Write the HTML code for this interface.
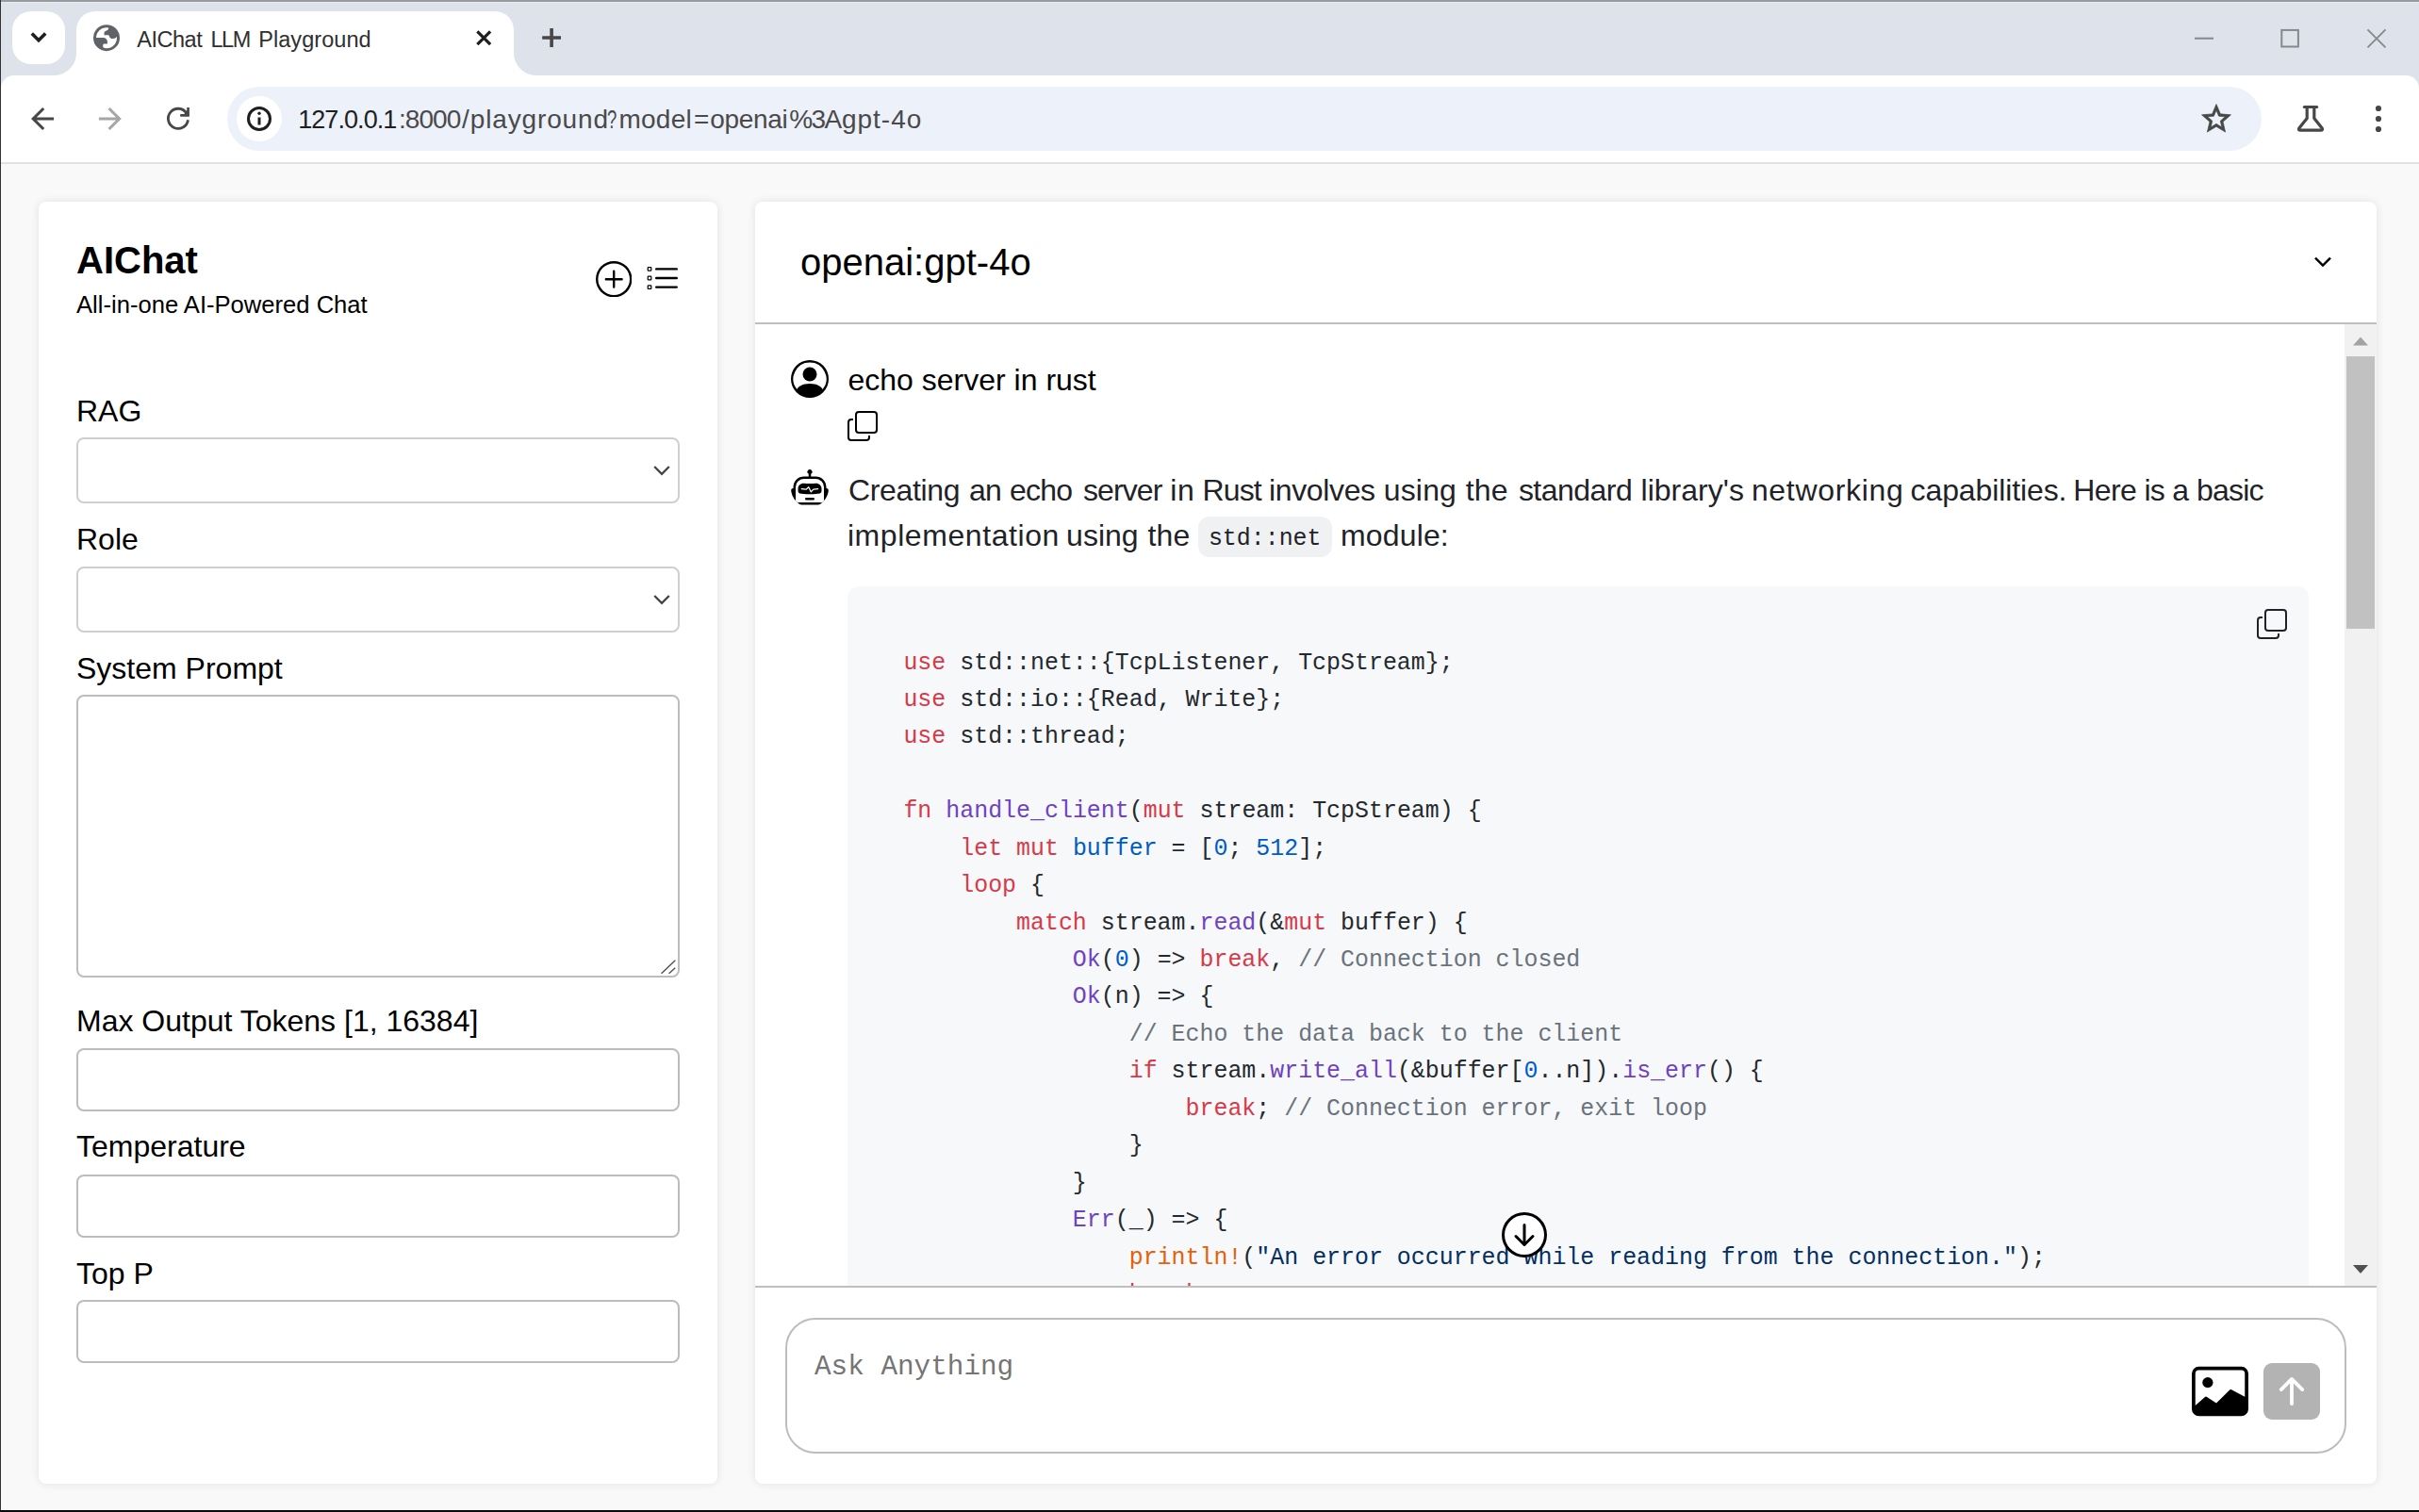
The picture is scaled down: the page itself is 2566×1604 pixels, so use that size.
<!DOCTYPE html>
<html lang="en">
<head>
<meta charset="utf-8">
<title>AIChat LLM Playground</title>
<style>
*{box-sizing:border-box;margin:0;padding:0}
html,body{width:2566px;height:1604px;overflow:hidden;background:#f9f9f9}
body{position:relative;font-family:"Liberation Sans",Arial,sans-serif;color:#000}
.abs{position:absolute}
svg{display:block;position:absolute}
/* ---------- browser chrome ---------- */
#frame{left:0;top:0;width:2566px;height:174px;background:#dee2ea}
#topb{left:0;top:0;width:2566px;height:2px;background:#989c9f}
#hl{left:1px;top:2px;width:2565px;height:1px;background:#e6eaf2}
#leftb{left:0;top:0;width:1px;height:1604px;background:#333;z-index:50}
#botb{left:0;top:1602px;width:2566px;height:2px;background:#0b0b0b;z-index:50}
#tabsearch{left:13px;top:12px;width:56px;height:56px;border-radius:20px;background:#fff}
#tab{left:81px;top:12px;width:464px;height:70px;border-radius:20px 20px 0 0;background:#fff}
#tab:before,#tab:after{content:"";position:absolute;bottom:2px;width:24px;height:24px;background:radial-gradient(circle at 0 0,rgba(255,255,255,0) 23.5px,#fff 24.5px)}
#tab:before{left:-24px}
#tab:after{right:-24px;background:radial-gradient(circle at 100% 0,rgba(255,255,255,0) 23.5px,#fff 24.5px)}
#toolbar{left:1px;top:80px;width:2565px;height:92px;background:#fff;border-radius:14px 14px 0 0}
#tbline{left:1px;top:172px;width:2565px;height:2px;background:#dfe1e3}
#omni{left:241px;top:92px;width:2158px;height:68px;border-radius:34px;background:#edf1fa}
#siteinfo{left:251px;top:102px;width:48px;height:48px;border-radius:24px;background:#fff}
.segoe{font-family:"Liberation Sans",Arial,sans-serif;white-space:nowrap}
#tabtitle{left:0;top:27px;width:540px;height:30px;font-size:23.5px;line-height:30px;color:#303030}
#tabtitle span{position:absolute;top:0}
#url{left:0;top:108.5px;width:1200px;height:36px;font-size:28px;line-height:36px;color:#4a4a4a}
#url span{position:absolute;top:0}
#url .h{color:#1f1f1f}
/* ---------- page ---------- */
.card{background:#fff;border-radius:8px;box-shadow:0 0 10px rgba(0,0,0,.1)}
#side{left:41px;top:214px;width:720px;height:1360px}
#main{left:801px;top:214px;width:1720px;height:1360px;overflow:hidden}
.lbl{left:81px;font-size:32px;line-height:40px;white-space:nowrap}
.inp{left:81px;width:640px;border:2px solid #c3c3c3;border-radius:8px;background:#fff}
</style>
</head>
<body>
<!-- browser frame -->
<div class="abs" id="frame"></div>
<div class="abs" id="hl"></div>
<div class="abs" id="topb"></div>
<div class="abs" id="tabsearch"></div>
<div class="abs" id="tab"></div>
<div class="abs" id="toolbar"></div>
<div class="abs" id="tbline"></div>
<div class="abs" id="omni"></div>
<div class="abs" id="siteinfo"></div>
<div class="abs segoe" id="tabtitle"><span style="left:145.2px;letter-spacing:-0.46px">AIChat</span> <span style="left:223.4px;letter-spacing:-1.42px">LLM</span> <span style="left:274.2px;letter-spacing:0.06px">Playground</span></div>
<div class="abs segoe" id="url"><span class="h" style="left:316.2px;top:0.5px;font-size:27px;letter-spacing:-0.93px">127.0.0.1</span><span style="left:423.0px;letter-spacing:-0.95px">:8000</span><span style="left:490.1px;letter-spacing:0.86px">/playground</span><span style="left:644.2px;transform:scaleX(.66);transform-origin:0 0">?</span><span style="left:656.4px;letter-spacing:0.29px">model</span><span style="left:735.9px;letter-spacing:0.00px">=</span><span style="left:753.3px;letter-spacing:-0.31px">openai</span><span style="left:837.2px;letter-spacing:-1.60px">%3A</span><span style="left:892.9px;letter-spacing:1.00px">gpt-4o</span></div>

<svg width="2566" height="174" viewBox="0 0 2566 174" style="left:0;top:0" fill="none">
<!-- tab search chevron -->
<path d="M33.8 35.6 L41 42.8 L48.2 35.6" stroke="#1f1f1f" stroke-width="3.6"/>
<!-- favicon globe -->
<g transform="translate(99 26.2)">
<circle cx="14" cy="14" r="14" fill="#5f6368"/>
<circle cx="14" cy="14" r="11" fill="#fff"/>
<clipPath id="gc"><circle cx="14" cy="14" r="12"/></clipPath>
<g clip-path="url(#gc)" fill="#5f6368">
<path d="M16.3 0V3C16 5 15.5 5.8 14 6.2C12.5 6.6 11.5 7.5 11.5 9V11H15.5C16.5 11 16.8 11.5 17 12.5C17.5 14 19 14.8 20.8 14.8C22.5 14.8 24 13.8 25 12.5L28 12V0Z"/>
<path d="M0 13.9H10.5C13 14 14.9 15.8 14.9 18V20.4H11.8C10.8 20.4 10.2 21 10.2 22V23C10.2 24 11 24.6 12 24.8V28H0Z"/>
</g>
</g>
<!-- tab close -->
<path d="M506.3 33.3 L520.1 47.1 M520.1 33.3 L506.3 47.1" stroke="#1f1f1f" stroke-width="3.2"/>
<!-- new tab -->
<path d="M575.2 40 H595 M585.1 30.1 V49.9" stroke="#474747" stroke-width="3.6"/>
<!-- window controls -->
<path d="M2328 40.7 H2348" stroke="#85888d" stroke-width="2"/>
<rect x="2420.3" y="31.9" width="17.6" height="17.6" stroke="#85888d" stroke-width="2"/>
<path d="M2511.5 31.3 L2530.5 50.3 M2530.5 31.3 L2511.5 50.3" stroke="#85888d" stroke-width="1.8"/>
<!-- back -->
<path d="M46.2 115 L35.2 126 L46.2 137 M35.6 126 H57.1" stroke="#474747" stroke-width="3.1"/>
<!-- forward -->
<path d="M115.6 115 L126.6 126 L115.6 137 M126.2 126 H104.9" stroke="#a6a6a6" stroke-width="3.1"/>
<!-- reload -->
<path d="M199.46 127.2 A10.55 10.55 0 1 1 197.85 120.05" stroke="#474747" stroke-width="2.8"/>
<path d="M198.2 113.9 H200.9 V123.7 H191.2 V121.1 H195.3 L198.2 117.2 Z" fill="#474747"/>
<!-- site info -->
<circle cx="275" cy="126" r="11.5" stroke="#1f1f1f" stroke-width="3"/>
<path d="M275 124.5 V132.5" stroke="#1f1f1f" stroke-width="3"/>
<circle cx="275" cy="120.2" r="1.7" fill="#1f1f1f"/>
<!-- star -->
<g transform="translate(2332.4 107.5) scale(1.55)"><path fill="#474747" stroke="#474747" stroke-width="0.45" stroke-linejoin="miter" d="M22 9.24l-7.19-.62L12 2 9.19 8.63 2 9.24l5.46 4.73L5.82 21 12 17.27 18.18 21l-1.63-7.03L22 9.24zM12 15.4l-3.76 2.27 1-4.28-3.32-2.88 4.38-.38L12 6.1l1.71 4.04 4.38.38-3.32 2.88 1 4.28L12 15.4z"/></g>
<!-- labs flask -->
<path d="M2444.4 113.5 H2457.6" stroke="#474747" stroke-width="3.2" stroke-linecap="round"/>
<path d="M2447.2 114 V125.4 L2438.8 136 Q2437.6 138.2 2440.2 138.2 H2461.8 Q2464.4 138.2 2463.2 136 L2454.8 125.4 V114" stroke="#474747" stroke-width="3.2" stroke-linejoin="round"/>
<!-- menu dots -->
<circle cx="2523" cy="115" r="3.1" fill="#474747"/><circle cx="2523" cy="126" r="3.1" fill="#474747"/><circle cx="2523" cy="137" r="3.1" fill="#474747"/>
</svg>

<!-- sidebar -->
<div class="abs card" id="side"></div>

<div class="abs" id="brand" style="left:81px;top:253px;font-size:40px;line-height:46px;font-weight:bold;white-space:nowrap">AIChat</div>
<div class="abs" id="tagline" style="left:81px;top:308px;font-size:25.6px;line-height:30px;white-space:nowrap">All-in-one AI-Powered Chat</div>
<svg width="38.4" height="38.4" viewBox="0 0 16 16" style="left:632px;top:277px" fill="#000"><path d="M8 15A7 7 0 1 1 8 1a7 7 0 0 1 0 14m0 1A8 8 0 1 0 8 0a8 8 0 0 0 0 16"/><path d="M8 4a.5.5 0 0 1 .5.5v3h3a.5.5 0 0 1 0 1h-3v3a.5.5 0 0 1-1 0v-3h-3a.5.5 0 0 1 0-1h3v-3A.5.5 0 0 1 8 4"/></svg>
<svg width="38.4" height="38.4" viewBox="0 0 16 16" style="left:682.9px;top:277px" fill="#000"><path fill-rule="evenodd" d="M2 2.5a.5.5 0 0 0-.5.5v1a.5.5 0 0 0 .5.5h1a.5.5 0 0 0 .5-.5V3a.5.5 0 0 0-.5-.5zM3 3H2v1h1z"/><path d="M5 3.5a.5.5 0 0 1 .5-.5h9a.5.5 0 0 1 0 1h-9a.5.5 0 0 1-.5-.5M5.5 7a.5.5 0 0 0 0 1h9a.5.5 0 0 0 0-1zm0 4a.5.5 0 0 0 0 1h9a.5.5 0 0 0 0-1z"/><path fill-rule="evenodd" d="M1.5 7a.5.5 0 0 1 .5-.5h1a.5.5 0 0 1 .5.5v1a.5.5 0 0 1-.5.5H2a.5.5 0 0 1-.5-.5zM2 7h1v1H2zm0 3.5a.5.5 0 0 0-.5.5v1a.5.5 0 0 0 .5.5h1a.5.5 0 0 0 .5-.5v-1a.5.5 0 0 0-.5-.5zm1 .5H2v1h1z"/></svg>
<div class="abs lbl" style="top:416px">RAG</div>
<div class="abs inp" style="top:464px;height:70px;border-color:#cfcfcf"></div>
<svg width="20" height="14" viewBox="0 0 20 14" style="left:692px;top:492px" fill="none"><path d="M2.2 3 L10 10.8 L17.8 3" stroke="#444" stroke-width="2.3"/></svg>
<div class="abs lbl" style="top:552px">Role</div>
<div class="abs inp" style="top:601px;height:70px;border-color:#cfcfcf"></div>
<svg width="20" height="14" viewBox="0 0 20 14" style="left:692px;top:629px" fill="none"><path d="M2.2 3 L10 10.8 L17.8 3" stroke="#444" stroke-width="2.3"/></svg>
<div class="abs lbl" style="top:689px">System Prompt</div>
<div class="abs inp" style="top:737px;height:300px;border-color:#bdbdbd"></div>
<svg width="20" height="20" viewBox="0 0 20 20" style="left:699px;top:1015px" fill="none"><path d="M2.6 17.8 L17.3 3.7 M10.6 17.8 L17.3 11.8" stroke="#505050" stroke-width="1.4"/></svg>
<div class="abs lbl" style="top:1063px">Max Output Tokens [1, 16384]</div>
<div class="abs inp" style="top:1112px;height:67px;border-color:#bcbcbc"></div>
<div class="abs lbl" style="top:1196px">Temperature</div>
<div class="abs inp" style="top:1246px;height:67px;border-color:#bcbcbc"></div>
<div class="abs lbl" style="top:1331px">Top P</div>
<div class="abs inp" style="top:1379px;height:67px;border-color:#bcbcbc"></div>

<!-- main -->
<div class="abs card" id="main"></div>

<style>
#hdr{left:849px;top:254.5px;font-size:40px;line-height:46px;white-space:nowrap}
.hline{left:801px;width:1720px;height:2px;background:#bfbfbf}
#chat{left:801px;top:344px;width:1720px;height:1020px;overflow:hidden}
#chat .abs{position:absolute}
#umsg{left:98.5px;top:39px;font-size:32px;line-height:40px;white-space:nowrap}
.md{font-family:"Liberation Sans",Arial,sans-serif;font-size:32px;line-height:48px;color:#1f2328;white-space:nowrap;letter-spacing:-0.213px}
#p1 span,.wl span{position:absolute;top:0}
#p2c{left:470px;top:204px;width:142px;height:43px;background:#eff1f3;border-radius:12px;white-space:pre}
#p2c code{position:absolute;left:10.9px;top:2.2px;font-family:"Liberation Mono",monospace;font-size:24.93px;line-height:43px;color:#1f2328}
#pre{left:98px;top:278px;width:1550px;height:900px;background:#f6f8fa;border-radius:12px}
#code{left:157.4px;top:339.5px;font-family:"Liberation Mono",monospace;font-size:24.93px;line-height:39.44px;color:#24292e;white-space:pre}
.k{color:#d73a49}.f{color:#6f42c1}.v{color:#005cc5}.c{color:#6a737d}.b{color:#e36209}.s{color:#032f62}
#sbtrack{left:1686px;top:0;width:34px;height:1020px;background:#f1f1f1}
#sbthumb{left:1688px;top:34px;width:30px;height:289px;background:#c1c1c1}
#inbox{left:833px;top:1398px;width:1656px;height:144px;border:2px solid #bdbdbd;border-radius:32px;background:#fff}
#ph{left:864px;top:1432px;font-family:"Liberation Mono",monospace;font-size:29.33px;line-height:38px;color:#757575;white-space:pre}
#send{left:2401px;top:1446px;width:60px;height:60px;border-radius:9px;background:#b3b3b3}
</style>
<div class="abs" id="hdr">openai:gpt-4o</div>
<svg width="24" height="16" viewBox="0 0 24 16" style="left:2452px;top:269.6px" fill="none"><path d="M4 3.6 L12 11.6 L20 3.6" stroke="#000" stroke-width="2.4"/></svg>
<div class="abs hline" style="top:342px"></div>
<div class="abs" id="chat">
  <svg width="40" height="40" viewBox="0 0 16 16" style="left:38px;top:38px" fill="#000"><path d="M11 6a3 3 0 1 1-6 0 3 3 0 0 1 6 0"/><path fill-rule="evenodd" d="M0 8a8 8 0 1 1 16 0A8 8 0 0 1 0 8m8-7a7 7 0 0 0-5.468 11.37C3.242 11.226 4.805 10 8 10s4.757 1.225 5.468 2.37A7 7 0 0 0 8 1"/></svg>
  <div class="abs" id="umsg">echo server in rust</div>
  <svg width="32" height="32" viewBox="0 0 16 16" style="left:98px;top:92px" fill="#000"><path fill-rule="evenodd" d="M4 2a2 2 0 0 1 2-2h8a2 2 0 0 1 2 2v8a2 2 0 0 1-2 2H6a2 2 0 0 1-2-2zm2-1a1 1 0 0 0-1 1v8a1 1 0 0 0 1 1h8a1 1 0 0 0 1-1V2a1 1 0 0 0-1-1zM2 5a1 1 0 0 0-1 1v8a1 1 0 0 0 1 1h8a1 1 0 0 0 1-1v-1h1v1a2 2 0 0 1-2 2H2a2 2 0 0 1-2-2V6a2 2 0 0 1 2-2h1v1z"/></svg>
  <svg width="40" height="40" viewBox="0 0 16 16" style="left:38px;top:154px;clip-path:circle(50%)" fill="#000"><path d="M6 12.5a.5.5 0 0 1 .5-.5h3a.5.5 0 0 1 0 1h-3a.5.5 0 0 1-.5-.5M3 8.062C3 6.76 4.235 5.765 5.53 5.886a26.6 26.6 0 0 0 4.94 0C11.765 5.765 13 6.76 13 8.062v1.157a.93.93 0 0 1-.765.935c-.845.147-2.34.346-4.235.346s-3.39-.2-4.235-.346A.93.93 0 0 1 3 9.219zm4.542-.827a.25.25 0 0 0-.217.068l-.92.9a25 25 0 0 1-1.871-.183.25.25 0 0 0-.068.495c.55.076 1.232.149 2.02.193a.25.25 0 0 0 .189-.071l.754-.736.847 1.71a.25.25 0 0 0 .404.062l.932-.97a25 25 0 0 0 1.922-.188.25.25 0 0 0-.068-.495c-.538.074-1.207.145-1.98.189a.25.25 0 0 0-.166.076l-.754.785-.842-1.7a.25.25 0 0 0-.182-.135"/><path d="M8.5 1.866a1 1 0 1 0-1 0V3h-2A4.5 4.5 0 0 0 1 7.500V8a1 1 0 0 0-1 1v2a1 1 0 0 0 1 1v1a2 2 0 0 0 2 2h10a2 2 0 0 0 2-2v-1a1 1 0 0 0 1-1V9a1 1 0 0 0-1-1v-.5A4.5 4.500 0 0 0 10.500 3h-2zM14 7.500V13a1 1 0 0 1-1 1H3a1 1 0 0 1-1-1V7.500A3.500 3.500 0 0 1 5.500 4h5A3.500 3.500 0 0 1 14 7.500"/></svg>
  <div class="abs md" id="p1" style="left:0;top:152px;width:1680px;height:48px"><span style="left:98.9px;letter-spacing:-0.34px">Creating</span> <span style="left:226.9px;letter-spacing:-0.72px">an</span> <span style="left:269.9px;letter-spacing:-0.71px">echo</span> <span style="left:347.9px;letter-spacing:-0.90px">server</span> <span style="left:440.2px;letter-spacing:0.80px">in</span> <span style="left:474.6px;letter-spacing:-0.90px">Rust</span> <span style="left:545.0px;letter-spacing:-0.36px">involves</span> <span style="left:666.7px;letter-spacing:0.18px">using</span> <span style="left:753.7px;letter-spacing:0.15px">the</span> <span style="left:809.9px;letter-spacing:-0.53px">standard</span> <span style="left:939.5px;letter-spacing:0.03px">library's</span> <span style="left:1056.9px;letter-spacing:0.68px">networking</span> <span style="left:1225.6px;letter-spacing:-0.11px">capabilities.</span> <span style="left:1398.2px;letter-spacing:-0.58px">Here</span> <span style="left:1473.6px;letter-spacing:-0.90px">is</span> <span style="left:1503.3px;letter-spacing:0.00px">a</span> <span style="left:1529.1px;letter-spacing:-0.81px">basic</span></div>
  <div class="abs md wl" id="p2a" style="left:0;top:200px;width:470px;height:48px"><span style="left:97.9px;letter-spacing:0.57px">implementation</span> <span style="left:330.1px;letter-spacing:0.01px">using</span> <span style="left:416.4px;letter-spacing:0.15px">the</span></div>
  <div class="abs" id="p2c"><code>std::net</code></div>
  <div class="abs md" id="p2b" style="left:621px;top:200px;letter-spacing:0.15px">module:</div>
  <div class="abs" id="pre"></div>
  <svg width="32" height="32" viewBox="0 0 16 16" style="left:1593px;top:302px" fill="#1f2328"><path fill-rule="evenodd" d="M4 2a2 2 0 0 1 2-2h8a2 2 0 0 1 2 2v8a2 2 0 0 1-2 2H6a2 2 0 0 1-2-2zm2-1a1 1 0 0 0-1 1v8a1 1 0 0 0 1 1h8a1 1 0 0 0 1-1V2a1 1 0 0 0-1-1zM2 5a1 1 0 0 0-1 1v8a1 1 0 0 0 1 1h8a1 1 0 0 0 1-1v-1h1v1a2 2 0 0 1-2 2H2a2 2 0 0 1-2-2V6a2 2 0 0 1 2-2h1v1z"/></svg>
  <div class="abs" id="code"><span class="k">use</span> std::net::{TcpListener, TcpStream};
<span class="k">use</span> std::io::{Read, Write};
<span class="k">use</span> std::thread;

<span class="k">fn</span> <span class="f">handle_client</span>(<span class="k">mut</span> stream: TcpStream) {
    <span class="k">let</span> <span class="k">mut</span> <span class="v">buffer</span> = [<span class="v">0</span>; <span class="v">512</span>];
    <span class="k">loop</span> {
        <span class="k">match</span> stream.<span class="f">read</span>(&amp;<span class="k">mut</span> buffer) {
            <span class="f">Ok</span>(<span class="v">0</span>) =&gt; <span class="k">break</span>, <span class="c">// Connection closed</span>
            <span class="f">Ok</span>(n) =&gt; {
                <span class="c">// Echo the data back to the client</span>
                <span class="k">if</span> stream.<span class="f">write_all</span>(&amp;buffer[<span class="v">0</span>..n]).<span class="f">is_err</span>() {
                    <span class="k">break</span>; <span class="c">// Connection error, exit loop</span>
                }
            }
            <span class="f">Err</span>(_) =&gt; {
                <span class="b">println!</span>(<span class="s">"An error occurred while reading from the connection."</span>);
                <span class="k">break</span>;
            }</div>
  <svg width="48" height="48" viewBox="0 0 16 16" style="left:792px;top:942px"><circle cx="8" cy="8" r="7.8" fill="#fff"/><path fill="#000" fill-rule="evenodd" d="M1 8a7 7 0 1 0 14 0A7 7 0 0 0 1 8m15 0A8 8 0 1 1 0 8a8 8 0 0 1 16 0M8.5 4.500a.5.5 0 0 0-1 0v5.793L5.354 8.146a.5.5 0 1 0-.708.708l3 3a.5.5 0 0 0 .708 0l3-3a.5.5 0 0 0-.708-.708L8.500 10.293z"/></svg>
  <div class="abs" id="sbtrack"></div>
  <div class="abs" id="sbthumb"></div>
  <svg width="34" height="34" viewBox="0 0 34 34" style="left:1686px;top:0"><path d="M9 22.5 L17 13.5 L25 22.5Z" fill="#a3a3a3"/></svg>
  <svg width="34" height="34" viewBox="0 0 34 34" style="left:1686px;top:986px"><path d="M9 12 L17 21 L25 12Z" fill="#505050"/></svg>
</div>
<div class="abs hline" style="top:1364px"></div>
<div class="abs" id="inbox"></div>
<div class="abs" id="ph">Ask Anything</div>
<svg width="60" height="60" viewBox="0 0 16 16" style="left:2325px;top:1446px" fill="#000"><path d="M6.002 5.500a1.500 1.500 0 1 1-3 0 1.500 1.500 0 0 1 3 0"/><path d="M2.002 1a2 2 0 0 0-2 2v10a2 2 0 0 0 2 2h12a2 2 0 0 0 2-2V3a2 2 0 0 0-2-2zm12 1a1 1 0 0 1 1 1v6.500l-3.777-1.947a.5.5 0 0 0-.577.093l-3.710 3.710-2.660-1.772a.5.5 0 0 0-.630.062L1.002 12V3a1 1 0 0 1 1-1z"/></svg>
<div class="abs" id="send"></div>
<svg width="60" height="60" viewBox="0 0 16 16" style="left:2401px;top:1446px" fill="#fff"><path fill-rule="evenodd" d="M8 12a.5.5 0 0 0 .5-.5V5.707l2.146 2.147a.5.5 0 0 0 .708-.708l-3-3a.5.5 0 0 0-.708 0l-3 3a.5.5 0 1 0 .708.708L7.500 5.707V11.500a.5.5 0 0 0 .5.5"/></svg>

<div class="abs" id="leftb"></div>
<div class="abs" id="botb"></div>
</body>
</html>
